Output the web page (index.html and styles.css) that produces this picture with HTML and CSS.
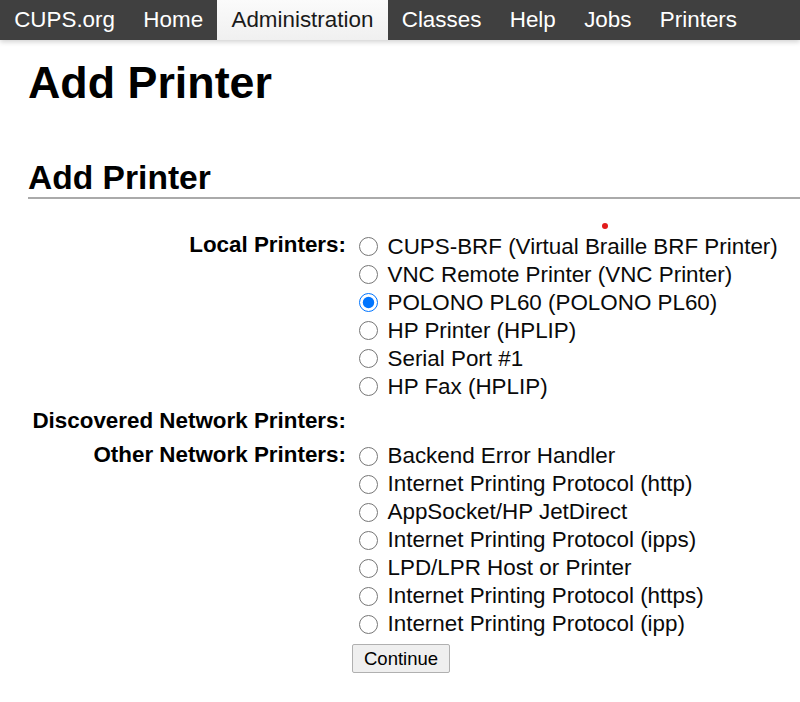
FILE: index.html
```html
<!DOCTYPE html>
<html lang="en">
  <head>
    <meta charset="UTF-8">
    <title>Add Printer - CUPS</title>
    <link rel="stylesheet" href="styles.css">
  </head>
  <body>
    <div class="header">
      <a class="tab" href="#">CUPS.org</a>
      <a class="tab" href="#">Home</a>
      <a class="tab active" href="#">Administration</a>
      <a class="tab" href="#">Classes</a>
      <a class="tab" href="#">Help</a>
      <a class="tab" href="#">Jobs</a>
      <a class="tab" href="#">Printers</a>
    </div>

    <div class="body">
      <h1 class="title">Add Printer</h1>
      <h2 class="title">Add Printer</h2>

      <form class="add-printer">
        <div class="fields">
          <div class="label">Local Printers:</div>
          <div class="choices">
            <label><input type="radio" name="device"><span>CUPS-BRF (Virtual Braille BRF Printer)</span></label>
            <label><input type="radio" name="device"><span>VNC Remote Printer (VNC Printer)</span></label>
            <label><input type="radio" name="device" checked><span>POLONO PL60 (POLONO PL60)</span></label>
            <label><input type="radio" name="device"><span>HP Printer (HPLIP)</span></label>
            <label><input type="radio" name="device"><span>Serial Port #1</span></label>
            <label><input type="radio" name="device"><span>HP Fax (HPLIP)</span></label>
          </div>

          <div class="label">Discovered Network Printers:</div>
          <div class="choices"></div>

          <div class="label">Other Network Printers:</div>
          <div class="choices">
            <label><input type="radio" name="device"><span>Backend Error Handler</span></label>
            <label><input type="radio" name="device"><span>Internet Printing Protocol (http)</span></label>
            <label><input type="radio" name="device"><span>AppSocket/HP JetDirect</span></label>
            <label><input type="radio" name="device"><span>Internet Printing Protocol (ipps)</span></label>
            <label><input type="radio" name="device"><span>LPD/LPR Host or Printer</span></label>
            <label><input type="radio" name="device"><span>Internet Printing Protocol (https)</span></label>
            <label><input type="radio" name="device"><span>Internet Printing Protocol (ipp)</span></label>
          </div>

          <div class="label"></div>
          <div class="submit">
            <button type="submit">Continue</button>
          </div>
        </div>
      </form>

      <span class="dot"></span>
    </div>
  </body>
</html>
```

FILE: styles.css
```css
* {
  margin: 0;
  padding: 0;
  box-sizing: border-box;
}

body {
  font-family: "Liberation Sans", Arial, sans-serif;
  font-size: 22.4px;
  color: #0a0a0a;
  background: #ffffff;
}

.header {
  display: flex;
  height: 40px;
  background: #404040;
  box-shadow: 0 2px 5px rgba(0, 0, 0, 0.18);
}

.header > .tab {
  padding: 0 14.2px;
  line-height: 40px;
  color: #ffffff;
  text-decoration: none;
}

.header > .active {
  background: linear-gradient(#fbfbfb, #f0f0f0);
  color: #1a1a1a;
}

.body {
  position: relative;
  padding-top: 1px;
  padding-left: 28px;
}

h1.title {
  margin-top: 16px;
  font-size: 44.8px;
  font-weight: bold;
  color: #000000;
}

h2.title {
  margin-top: 51px;
  font-size: 33.6px;
  font-weight: bold;
  color: #000000;
  border-bottom: 2px solid #aaaaaa;
}

.add-printer {
  margin-top: 32px;
}

.fields {
  display: grid;
  grid-template-columns: 318px auto;
  column-gap: 6px;
  row-gap: 6px;
}

.fields > .label {
  text-align: right;
  font-weight: bold;
  line-height: 28px;
  color: #000000;
  white-space: nowrap;
}

.choices {
  display: flex;
  flex-direction: column;
  padding-top: 1.5px;
}

.choices > label {
  display: flex;
  align-items: center;
  height: 28px;
  white-space: nowrap;
}

.choices input {
  width: 19px;
  height: 19px;
  margin: 0 10px 0 6.5px;
}

.submit > button {
  height: 29px;
  padding: 0 11px;
  font-family: "Liberation Sans", Arial, sans-serif;
  font-size: 18.5px;
  color: #000000;
  background: #efefef;
  border: 1px solid #b0b0b0;
  border-radius: 2px;
}

.dot {
  position: absolute;
  left: 602px;
  top: 183px;
  width: 6px;
  height: 6px;
  border-radius: 50%;
  background: #e21b1b;
}
```
